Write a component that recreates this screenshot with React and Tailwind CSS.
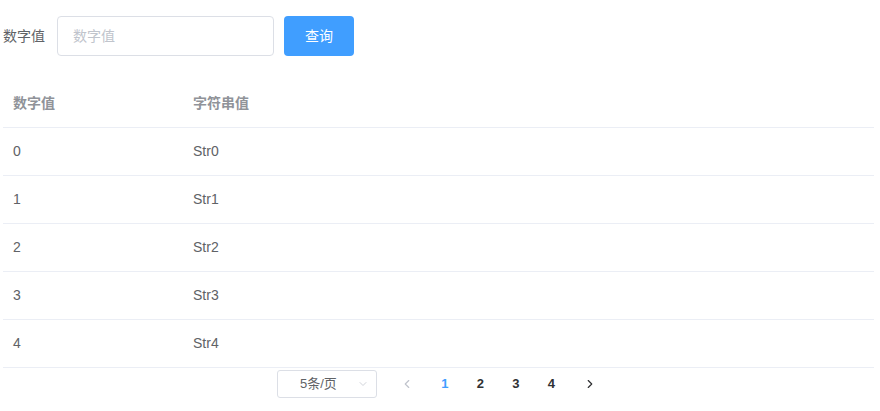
import React from 'react';
import { ChevronLeft, ChevronRight, ChevronDown } from 'lucide-react';

const rows = [0, 1, 2, 3, 4].map((n) => ({ num: n, str: `Str${n}` }));

export default function App() {
  return (
    <div className="min-h-[411px] bg-white px-[3px] pt-[16px] text-[14px] text-[#606266]" style={{ fontFamily: '"Liberation Sans", "Noto Sans CJK SC", sans-serif' }}>
      {/* Search form */}
      <div className="flex items-center h-[40px]">
        <label className="pr-[12px] leading-[40px]">数字值</label>
        <input
          placeholder="数字值"
          className="w-[217px] h-[40px] border border-[#DCDFE6] rounded-[4px] px-[15px] outline-none placeholder:text-[#C0C4CC]"
        />
        <button className="ml-[10px] w-[70px] h-[40px] rounded-[4px] bg-[#409EFF] text-white">查询</button>
      </div>

      {/* Table */}
      <div className="mt-[24px] w-[871px]">
        <div className="flex h-[48px] items-center border-b border-[#EBEEF5] font-bold text-[#909399]">
          <div className="w-[180px] pl-[10px]">数字值</div>
          <div className="pl-[10px]">字符串值</div>
        </div>
        {rows.map((r) => (
          <div key={r.num} className="flex h-[48px] items-center border-b border-[#EBEEF5]">
            <div className="w-[180px] pl-[10px]">{r.num}</div>
            <div className="pl-[10px]">{r.str}</div>
          </div>
        ))}
      </div>

      {/* Pagination */}
      <div className="flex justify-center items-center pt-[2px] pl-[6px] text-[13px]">
        <div className="flex items-center justify-between w-[100px] h-[28px] border border-[#DCDFE6] rounded-[3px] pl-[22px] pr-[7px] mr-[10px]">
          <span className="text-[#606266]">5条/页</span>
          <ChevronDown className="w-[12px] h-[12px] text-[#C0C4CC]" strokeWidth={1.5} />
        </div>
        <button className="w-[40px] h-[28px] flex items-center justify-center text-[#C0C4CC]">
          <ChevronLeft className="w-[14px] h-[14px]" strokeWidth={2} />
        </button>
        {[1, 2, 3, 4].map((p) => (
          <div
            key={p}
            className={`w-[35.5px] h-[28px] leading-[28px] text-center font-bold ${p === 1 ? 'text-[#409EFF]' : 'text-[#303133]'}`}
          >
            {p}
          </div>
        ))}
        <button className="w-[40px] h-[28px] flex items-center justify-center pl-[2px] text-[#303133]">
          <ChevronRight className="w-[14px] h-[14px]" strokeWidth={2} />
        </button>
      </div>
    </div>
  );
}
